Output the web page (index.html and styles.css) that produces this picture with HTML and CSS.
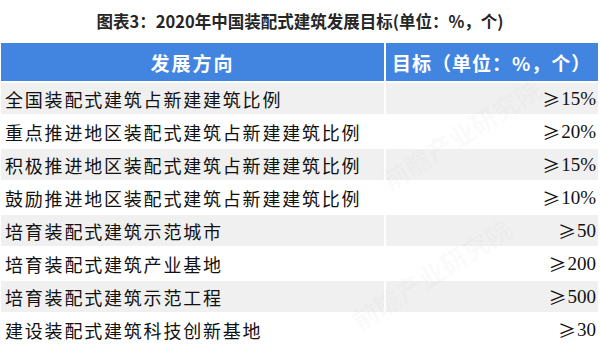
FILE: index.html
```html
<!DOCTYPE html>
<html lang="zh">
<head>
<meta charset="utf-8">
<link rel="stylesheet" href="styles.css">
</head>
<body>
<div class="page">
  <h1 class="title">图表3：2020年中国装配式建筑发展目标(单位：%，个)</h1>
  <div class="table">
    <div class="th">发展方向</div>
    <div class="th th-right">目标（单位：%，个）</div>

    <div class="td gray">全国装配式建筑占新建建筑比例</div>
    <div class="td gray num"><span class="ge">≥</span>15%</div>

    <div class="td">重点推进地区装配式建筑占新建建筑比例</div>
    <div class="td num"><span class="ge">≥</span>20%</div>

    <div class="td gray">积极推进地区装配式建筑占新建建筑比例</div>
    <div class="td gray num"><span class="ge">≥</span>15%</div>

    <div class="td">鼓励推进地区装配式建筑占新建建筑比例</div>
    <div class="td num"><span class="ge">≥</span>10%</div>

    <div class="td gray">培育装配式建筑示范城市</div>
    <div class="td gray num"><span class="ge">≥</span>50</div>

    <div class="td">培育装配式建筑产业基地</div>
    <div class="td num"><span class="ge">≥</span>200</div>

    <div class="td gray">培育装配式建筑示范工程</div>
    <div class="td gray num"><span class="ge">≥</span>500</div>

    <div class="td">建设装配式建筑科技创新基地</div>
    <div class="td num"><span class="ge">≥</span>30</div>
  </div>
  <div class="wm wm1">前瞻产业研究院</div>
  <div class="wm wm2">前瞻产业研究院</div>
</div>
</body>
</html>
```
FILE: styles.css
```css
html, body {
  margin: 0;
  padding: 0;
  background: #ffffff;
}
.page {
  position: relative;
  width: 600px;
  height: 356px;
  overflow: hidden;
}
.title {
  margin: 0;
  height: 43px;
  display: flex;
  align-items: center;
  justify-content: center;
  font-family: "Noto Sans CJK SC", "Liberation Sans", sans-serif;
  font-size: 16.5px;
  font-weight: bold;
  color: #262626;
  padding-bottom: 1px;
  box-sizing: border-box;
}
.table {
  display: grid;
  grid-template-columns: 383px 212px;
  grid-template-rows: 38px;
  grid-auto-rows: 31px;
  column-gap: 2px;
  row-gap: 2px;
  padding-left: 1px;
}
.th {
  background: #4285e0;
  color: #ffffff;
  font-family: "Noto Sans CJK SC", sans-serif;
  font-weight: bold;
  font-size: 19px;
  letter-spacing: 2px;
  display: flex;
  align-items: center;
  justify-content: center;
}
.th-right {
  justify-content: flex-start;
  padding-left: 6px;
  letter-spacing: 1px;
}
.td {
  font-family: "Noto Sans CJK SC", sans-serif;
  font-size: 18px;
  letter-spacing: 1.8px;
  color: #111111;
  display: flex;
  align-items: center;
  padding-left: 4px;
  white-space: nowrap;
}
.gray {
  background: #f0f0f0;
}
.num {
  justify-content: flex-end;
  padding-left: 0;
  padding-right: 2px;
  font-family: "Liberation Serif", serif;
  font-size: 19px;
  letter-spacing: 0;
}
.ge {
  font-family: "Noto Sans CJK SC", sans-serif;
  font-size: 18px;
  margin-right: 1px;
}
.wm {
  position: absolute;
  font-family: "Noto Sans CJK SC", sans-serif;
  font-weight: bold;
  font-size: 26px;
  color: rgba(120, 120, 120, 0.045);
  transform: rotate(-32deg);
  white-space: nowrap;
  pointer-events: none;
}
.wm1 {
  left: 370px;
  top: 115px;
}
.wm2 {
  left: 340px;
  top: 255px;
}
```
